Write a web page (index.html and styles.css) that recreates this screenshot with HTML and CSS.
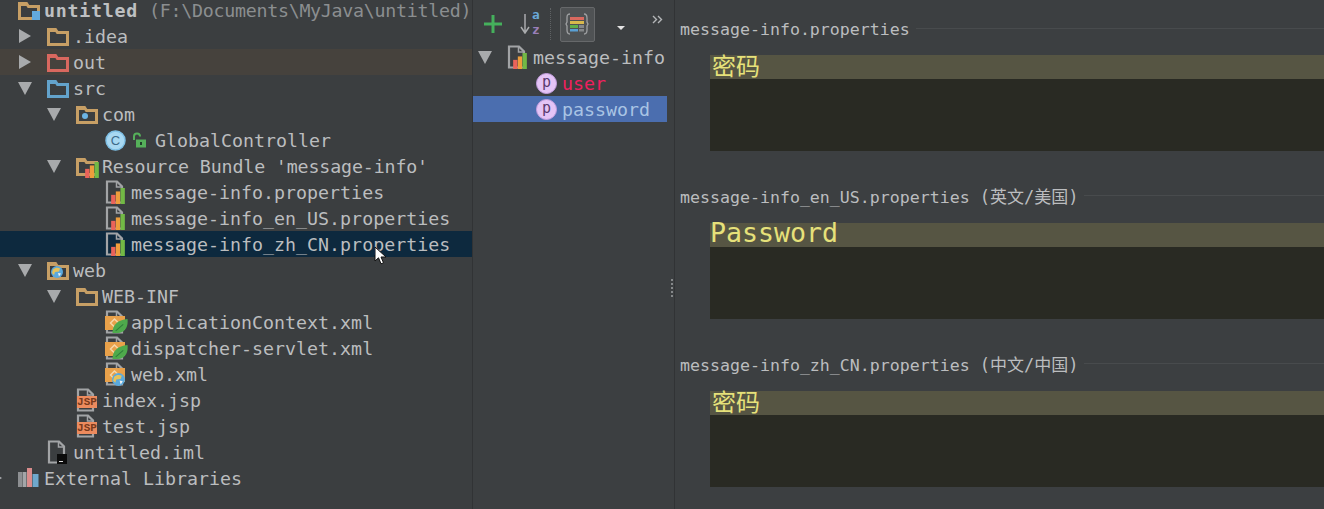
FILE: index.html
```html
<!DOCTYPE html>
<html lang="en">
<head>
<meta charset="utf-8">
<title>Resource Bundle</title>
<link rel="stylesheet" href="styles.css">
</head>
<body>
<svg class="sprite" aria-hidden="true">
  <symbol id="bars" viewBox="0 0 12 14">
    <rect x="0" y="6" width="3.800" height="8" fill="#ea635a"/>
    <rect x="4.100" y="3" width="3.800" height="11" fill="#ee9d3c"/>
    <rect x="8.200" y="0" width="3.800" height="14" fill="#72b945"/>
  </symbol>
  <symbol id="folder" viewBox="0 0 22 20">
    <path d="M1.500 3.500h7l2 3h10v12h-19z" fill="none" stroke="currentColor" stroke-width="3"/>
    <rect x="1" y="2" width="8" height="4" fill="currentColor"/>
  </symbol>
  <symbol id="doc" viewBox="0 0 20 24">
    <path d="M2 1.500h10l5 5v16H2z" fill="none" stroke="#a2a4a6" stroke-width="2.200"/>
    <path d="M11.500 1.500v5.500h5" fill="none" stroke="#a2a4a6" stroke-width="1.500"/>
  </symbol>
  <symbol id="prop" viewBox="0 0 20 24">
    <use href="#doc" width="20" height="24" x="0" y="0"/>
    <use href="#bars" x="6" y="8" width="14" height="16"/>
  </symbol>
  <symbol id="xml" viewBox="0 0 20 24">
    <use href="#doc" width="20" height="24"/>
    <rect x="0" y="6" width="20" height="14" fill="#e9a14a"/>
    <path d="M5.500 13l4-4 4 4-4 4z" fill="none" stroke="#f6d7a8" stroke-width="1.500"/>
  </symbol>
  <symbol id="jsp" viewBox="0 0 20 24">
    <use href="#doc" width="20" height="24"/>
  </symbol>
  <symbol id="globe" viewBox="0 0 12 12">
    <circle cx="6" cy="6" r="6" fill="#5aa9dd"/>
    <path d="M2 3.500c2-2 5-2 7-1l-1 3-4 .500-1 3-2-2z" fill="#e6c35c"/>
    <path d="M7 7l3 .500-2 3z" fill="#f2f2f2"/>
  </symbol>
  <symbol id="leaf" viewBox="0 0 14 14">
    <path d="M0 13C0 5 5 1 14 0c1 8-3 13-9 13z" fill="#4eaa4c"/>
    <path d="M3 11l7-6" stroke="#2f7d3a" stroke-width="1"/>
  </symbol>
</svg>

<div class="app">
  <aside class="project">
    <ul class="tree">
      <li class="row d0">
        <span class="icon">
          <svg class="ic-folder tan" width="22" height="20"><use href="#folder"/></svg>
          <span class="module-mark"></span>
        </span>
        <span class="name"><b>untitled</b> <span class="dim">(F:\Documents\MyJava\untitled)</span></span>
      </li>
      <li class="row d1">
        <span class="arrow right"></span>
        <span class="icon"><svg class="ic-folder tan" width="22" height="20"><use href="#folder"/></svg></span>
        <span class="name">.idea</span>
      </li>
      <li class="row d1 excluded">
        <span class="arrow right"></span>
        <span class="icon"><svg class="ic-folder red" width="22" height="20"><use href="#folder"/></svg></span>
        <span class="name">out</span>
      </li>
      <li class="row d1">
        <span class="arrow down"></span>
        <span class="icon"><svg class="ic-folder blue" width="22" height="20"><use href="#folder"/></svg></span>
        <span class="name">src</span>
      </li>
      <li class="row d2">
        <span class="arrow down"></span>
        <span class="icon">
          <svg class="ic-folder tan" width="22" height="20"><use href="#folder"/></svg>
          <span class="pkg-dot"></span>
        </span>
        <span class="name">com</span>
      </li>
      <li class="row d3">
        <span class="icon wide">
          <svg width="21" height="21" viewBox="0 0 21 21">
            <circle cx="10.500" cy="10.500" r="9.500" fill="#a8d8f2" stroke="#7fc0e6" stroke-width="1.500"/>
            <text x="10.500" y="15" class="cls-letter">C</text>
          </svg>
          <svg class="lock" width="16" height="16" viewBox="0 0 16 16">
            <path d="M3 8V4.500a3 3 0 0 1 6 0" fill="none" stroke="#55b05a" stroke-width="2"/>
            <rect x="5" y="7.500" width="10" height="8" fill="#55b05a"/>
            <rect x="9" y="10" width="2" height="3" fill="#20402a"/>
          </svg>
        </span>
        <span class="name">GlobalController</span>
      </li>
      <li class="row d2">
        <span class="arrow down"></span>
        <span class="icon">
          <svg class="ic-folder tan" width="22" height="20"><use href="#folder"/></svg>
          <svg class="bundle-bars" width="14" height="16"><use href="#bars"/></svg>
        </span>
        <span class="name tight">Resource Bundle 'message-info'</span>
      </li>
      <li class="row d3">
        <span class="icon"><svg width="20" height="24"><use href="#prop"/></svg></span>
        <span class="name">message-info.properties</span>
      </li>
      <li class="row d3">
        <span class="icon"><svg width="20" height="24"><use href="#prop"/></svg></span>
        <span class="name">message-info_en_US.properties</span>
      </li>
      <li class="row d3 selected">
        <span class="icon"><svg width="20" height="24"><use href="#prop"/></svg></span>
        <span class="name">message-info_zh_CN.properties</span>
      </li>
      <li class="row d1">
        <span class="arrow down"></span>
        <span class="icon">
          <svg class="ic-folder tan" width="22" height="20"><use href="#folder"/></svg>
          <svg class="web-globe" width="12" height="12"><use href="#globe"/></svg>
        </span>
        <span class="name">web</span>
      </li>
      <li class="row d2">
        <span class="arrow down"></span>
        <span class="icon"><svg class="ic-folder tan" width="22" height="20"><use href="#folder"/></svg></span>
        <span class="name">WEB-INF</span>
      </li>
      <li class="row d3">
        <span class="icon">
          <svg width="20" height="24"><use href="#xml"/></svg>
          <svg class="xml-badge" width="16" height="15"><use href="#leaf"/></svg>
        </span>
        <span class="name">applicationContext.xml</span>
      </li>
      <li class="row d3">
        <span class="icon">
          <svg width="20" height="24"><use href="#xml"/></svg>
          <svg class="xml-badge" width="16" height="15"><use href="#leaf"/></svg>
        </span>
        <span class="name">dispatcher-servlet.xml</span>
      </li>
      <li class="row d3">
        <span class="icon">
          <svg width="20" height="24"><use href="#xml"/></svg>
          <svg class="xml-badge" width="13" height="13"><use href="#globe"/></svg>
        </span>
        <span class="name">web.xml</span>
      </li>
      <li class="row d2">
        <span class="icon">
          <svg width="20" height="24"><use href="#jsp"/></svg>
          <span class="jsp-tag">JSP</span>
        </span>
        <span class="name">index.jsp</span>
      </li>
      <li class="row d2">
        <span class="icon">
          <svg width="20" height="24"><use href="#jsp"/></svg>
          <span class="jsp-tag">JSP</span>
        </span>
        <span class="name">test.jsp</span>
      </li>
      <li class="row d1">
        <span class="icon">
          <svg width="20" height="24"><use href="#doc"/></svg>
          <span class="iml-tag"></span>
        </span>
        <span class="name">untitled.iml</span>
      </li>
      <li class="row d0">
        <span class="arrow right"></span>
        <span class="icon">
          <svg width="22" height="20" viewBox="0 0 22 20">
            <rect x="0" y="4" width="4" height="15" fill="#8d8f92"/>
            <rect x="4.500" y="4" width="4" height="15" fill="#a3a5a8"/>
            <rect x="9" y="0" width="5" height="19" fill="#d98c8c"/>
            <rect x="14.500" y="6" width="6" height="13" fill="#6fa8cc"/>
          </svg>
        </span>
        <span class="name">External Libraries</span>
      </li>
    </ul>
    <svg class="cursor" width="14" height="19" viewBox="0 0 14 19">
      <path d="M1 1v14l3.500-3.200 2.500 6 2.500-1-2.500-5.800h5z" fill="#fff" stroke="#111" stroke-width="1"/>
    </svg>
  </aside>

  <section class="structure">
    <div class="toolbar">
      <svg class="tool-plus" width="18" height="18" viewBox="0 0 18 18">
        <path d="M9 0v18M0 9h18" stroke="#45b05c" stroke-width="3"/>
      </svg>
      <span class="tool-sort">
        <svg width="10" height="20" viewBox="0 0 10 20">
          <path d="M5 0v18M1 13l4 6 4-6" fill="none" stroke="#a9abad" stroke-width="1.500"/>
        </svg>
        <span class="az"><span class="az-a">a</span><span class="az-z">z</span></span>
      </span>
      <span class="tool-sep"></span>
      <span class="tool-toggle">
        <svg width="24" height="24" viewBox="0 0 24 24">
          <path d="M5 2C2 2 2 4 2 6v4l-1 2 1 2v4c0 2 0 4 3 4M19 2c3 0 3 2 3 4v4l1 2-1 2v4c0 2 0 4-3 4" fill="none" stroke="#9fa1a3" stroke-width="1.300"/>
          <rect x="5" y="5" width="14" height="3" fill="#d9695f"/>
          <rect x="5" y="9" width="14" height="3" fill="#d8b84c"/>
          <rect x="5" y="13" width="8" height="3" fill="#5fae4b"/>
          <rect x="14" y="13" width="5" height="3" fill="#85888a"/>
          <rect x="5" y="17" width="8" height="2.500" fill="#5aa0d4"/>
          <rect x="14" y="17" width="5" height="2.500" fill="#85888a"/>
        </svg>
      </span>
      <span class="tool-drop"></span>
      <svg class="tool-more" width="11" height="9" viewBox="0 0 11 9">
        <path d="M1 1l3.500 3.500L1 8M6 1l3.500 3.500L6 8" fill="none" stroke="#b4b6b8" stroke-width="1.400"/>
      </svg>
    </div>
    <ul class="struct-tree">
      <li class="srow head">
        <span class="arrow down"></span>
        <svg width="20" height="24"><use href="#prop"/></svg>
        <span class="name">message-info</span>
      </li>
      <li class="srow key">
        <span class="pbadge">p</span>
        <span class="name err">user</span>
      </li>
      <li class="srow key current">
        <span class="pbadge">p</span>
        <span class="name">password</span>
      </li>
    </ul>
    <span class="grip"></span>
  </section>

  <main class="editors">
    <section class="bundle first">
      <h2 class="bundle-label"><span>message-info.properties</span><i class="rule"></i></h2>
      <div class="editor"><div class="line cjk">密码</div></div>
    </section>
    <section class="bundle">
      <h2 class="bundle-label"><span>message-info_en_US.properties <span class="locale">(英文/美国)</span></span><i class="rule"></i></h2>
      <div class="editor"><div class="line latin">Password</div></div>
    </section>
    <section class="bundle">
      <h2 class="bundle-label"><span>message-info_zh_CN.properties <span class="locale">(中文/中国)</span></span><i class="rule"></i></h2>
      <div class="editor"><div class="line cjk">密码</div></div>
    </section>
  </main>
</div>
</body>
</html>
```
FILE: styles.css
```css
* { box-sizing: border-box; }
html, body { margin: 0; padding: 0; background: #3c3f41; overflow: hidden; }
ul { list-style: none; margin: 0; padding: 0; }
.sprite { display: none; }

.app {
  display: flex;
  width: 1324px;
  height: 509px;
  overflow: hidden;
  background: #3c3f41;
  color: #bbbdbf;
  font-family: "DejaVu Sans Mono", "Liberation Mono", monospace;
}

/* Project tree */
.project {
  position: relative;
  flex: 0 0 473px;
  overflow: hidden;
  border-right: 1px solid #313335;
  background: #3b3e40;
}
.tree { margin-top: -3px; }
.row {
  display: flex;
  align-items: center;
  height: 26px;
  font-size: 18.3px;
  white-space: nowrap;
}
.d0 { padding-left: 18px; }
.d1 { padding-left: 47px; }
.d2 { padding-left: 76px; }
.d3 { padding-left: 105px; }
.excluded { background: #46423d; }
.selected { background: #0d293e; }
.name { padding-top: 2px; line-height: 24px; }
.tight { letter-spacing: -0.14px; }
.dim { color: #8b8e90; letter-spacing: -0.27px; }
.row b { font-weight: 700; color: #bec0c2; letter-spacing: 0.75px; }

.arrow {
  flex: 0 0 29px;
  margin-left: -29px;
  height: 14px;
  position: relative;
}
.arrow::before {
  content: "";
  position: absolute;
  width: 0;
  height: 0;
}
.arrow.right::before {
  left: 1px;
  top: 0;
  border-left: 12px solid #a8aaac;
  border-top: 7px solid transparent;
  border-bottom: 7px solid transparent;
}
.arrow.down::before {
  left: 0;
  top: 1px;
  border-top: 13px solid #a8aaac;
  border-left: 7.500px solid transparent;
  border-right: 7.500px solid transparent;
}

.icon {
  position: relative;
  flex: 0 0 26px;
  height: 24px;
  display: flex;
  align-items: center;
}
.icon.wide { flex-basis: 50px; gap: 5px; }
.tan { color: #c79f65; }
.red { color: #d9685f; }
.blue { color: #63a3cc; }

.module-mark {
  position: absolute;
  left: 14px;
  top: 13px;
  width: 8px;
  height: 9px;
  background: #62a9dd;
}
.pkg-dot {
  position: absolute;
  left: 6px;
  top: 11px;
  width: 6px;
  height: 6px;
  border-radius: 50%;
  background: #6cb4e4;
}
.bundle-bars {
  position: absolute;
  left: 9px;
  top: 8px;
}
.web-globe {
  position: absolute;
  left: 4px;
  top: 8px;
}
.xml-badge {
  position: absolute;
  left: 7px;
  bottom: 0;
}
.cls-letter {
  font-family: "Liberation Sans", sans-serif;
  font-size: 13px;
  fill: #3d6b8a;
  text-anchor: middle;
}
.jsp-tag {
  position: absolute;
  left: 1px;
  top: 8px;
  width: 20px;
  height: 12px;
  background: #ec8b5e;
  color: #7a3a1c;
  font-family: "Liberation Mono", monospace;
  font-size: 11px;
  font-weight: 700;
  line-height: 12px;
  text-align: center;
}
.iml-tag {
  position: absolute;
  left: 10px;
  top: 14px;
  width: 10px;
  height: 10px;
  background: #0c0c0c;
}
.iml-tag::after {
  content: "";
  position: absolute;
  left: 2px;
  top: 7px;
  width: 4px;
  height: 1px;
  background: #ddd;
}
.cursor {
  position: absolute;
  left: 374px;
  top: 246px;
}

/* Structure panel */
.structure {
  position: relative;
  flex: 0 0 202px;
  border-right: 1px solid #313335;
}
.toolbar {
  display: flex;
  align-items: center;
  height: 44px;
  padding: 4px 0 0 11px;
}
.tool-plus { flex: none; }
.tool-sort {
  display: flex;
  align-items: center;
  gap: 2px;
  margin-left: 18px;
}
.az {
  display: flex;
  flex-direction: column;
  margin-top: -4px;
  font-size: 12.8px;
  font-weight: 700;
  line-height: 15px;
}
.az-a { color: #6aa9d9; }
.az-z { color: #9a7fb8; }
.tool-sep {
  width: 0;
  height: 32px;
  margin-left: 10px;
  border-left: 1px dotted #5f6264;
}
.tool-toggle {
  display: flex;
  align-items: center;
  justify-content: center;
  width: 35px;
  height: 35px;
  margin-left: 9px;
  background: #4f5254;
  border: 1px solid #66686a;
  border-radius: 2px;
}
.tool-drop {
  width: 0;
  height: 0;
  margin: 8px 0 0 22px;
  border-top: 4px solid #e4e4e4;
  border-left: 4px solid transparent;
  border-right: 4px solid transparent;
}
.tool-more {
  flex: none;
  margin: -10px 0 0 27px;
}
.srow {
  position: relative;
  display: flex;
  align-items: center;
  width: 194px;
  height: 26px;
  font-size: 18.3px;
  white-space: nowrap;
}
.srow.head { padding-left: 34px; gap: 6px; }
.srow.head .arrow { position: absolute; left: 5px; margin: 0; }
.srow.key { padding-left: 63px; gap: 5px; }
.current { background: #4b6eaf; color: #a9c4e4; }
.err { color: #f0205e; }
.pbadge {
  flex: none;
  width: 21px;
  height: 21px;
  border-radius: 50%;
  background: #e4c4f6;
  border: 1px solid #c49ee0;
  color: #5a3a6e;
  font-size: 15px;
  line-height: 17px;
  text-align: center;
}
.grip {
  position: absolute;
  left: 197px;
  top: 278px;
  width: 4px;
  height: 20px;
  background-image: radial-gradient(circle, #85888a 1px, transparent 1.200px);
  background-size: 4px 4px;
}

/* Editors */
.editors {
  flex: 1 1 auto;
  min-width: 0;
  background: #3c3f41;
}
.bundle { padding-top: 16px; padding-bottom: 17px; }
.bundle.first { padding-top: 17px; }
.bundle.first .bundle-label { margin-bottom: 12px; }
.bundle + .bundle { padding-top: 0; margin-top: 16px; }
.bundle-label {
  display: flex;
  align-items: center;
  gap: 6px;
  height: 26px;
  margin: 0 0 13px;
  padding-left: 5px;
  font-size: 16.6px;
  font-weight: 400;
  line-height: 26px;
  color: #bbbdbf;
  white-space: nowrap;
}
.locale { font-family: "DejaVu Sans Mono", "Noto Sans CJK SC", monospace; font-size: 17px; }
.rule {
  flex: 1;
  height: 1px;
  margin-top: -4px;
  background: #484b4d;
}
.editor {
  height: 96px;
  margin-left: 35px;
  background: #292a23;
}
.line {
  height: 24px;
  background: #565543;
  color: #e6e17a;
  white-space: nowrap;
}
.cjk {
  padding-left: 2px;
  font-family: "Noto Sans CJK SC", sans-serif;
  font-size: 24px;
  line-height: 20px;
}
.latin {
  font-size: 26.6px;
  line-height: 20px;
}
```
